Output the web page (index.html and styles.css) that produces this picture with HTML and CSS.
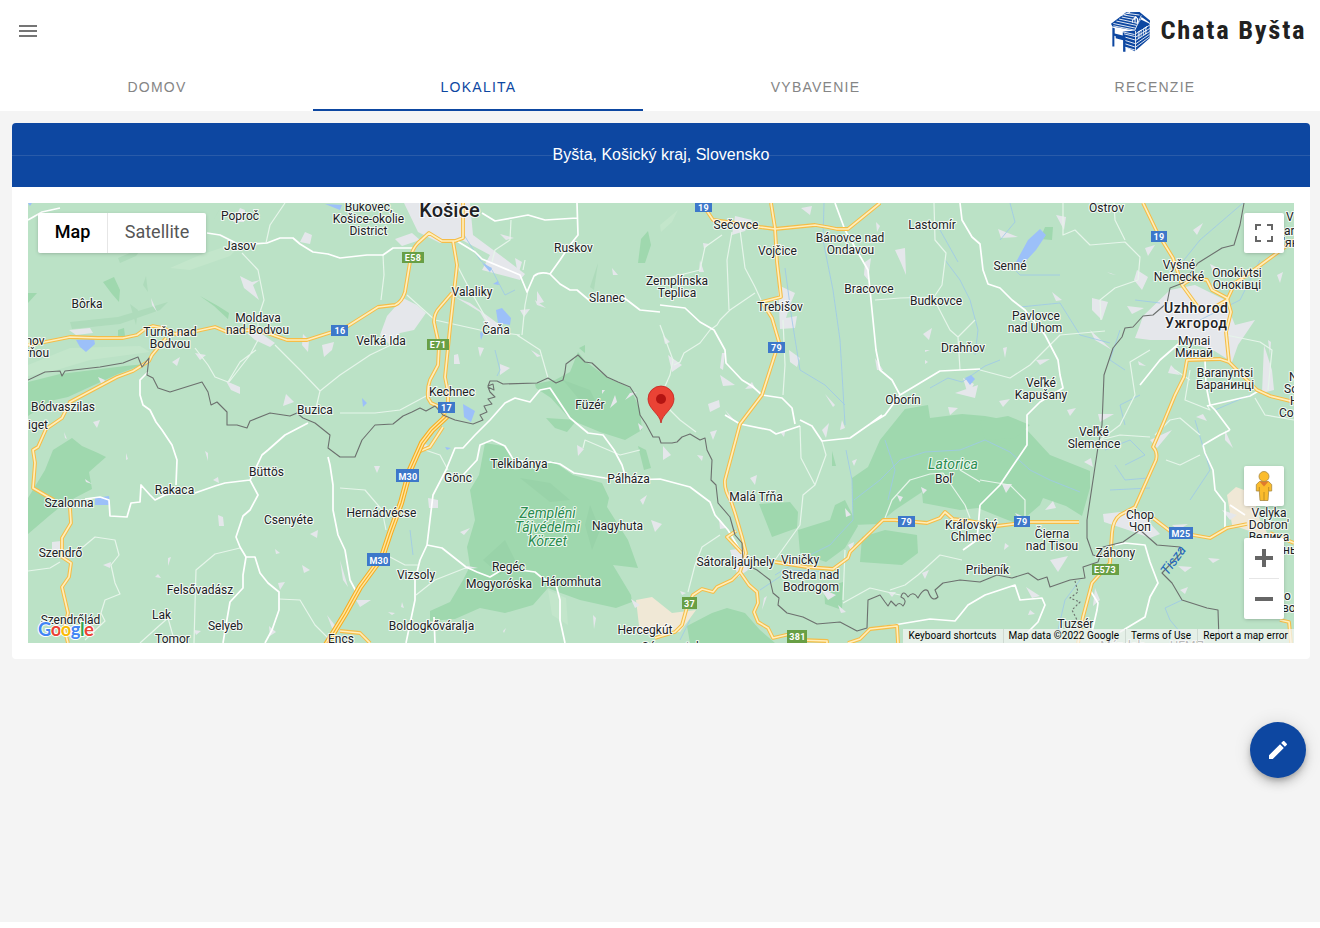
FILE: index.html
```html
<!DOCTYPE html>
<html lang="sk">
<head>
<meta charset="utf-8">
<title>Chata Byšta</title>
<link rel="stylesheet" href="styles.css">
</head>
<body>
<header class="topbar">
  <button class="menu" aria-label="Menu"><svg viewBox="0 0 24 24"><path d="M3 6h18v2H3zM3 11h18v2H3zM3 16h18v2H3z"/></svg></button>
  <a class="brand">
    <svg class="house" viewBox="60 33 122 122">
      <path class="ink" d="M63 71 108 37l40-1 31 25v8l-25-18-19 41-68-13z"/>
      <path class="ink" d="M67 82l7 2v16l24 6V94l34-2 20-34 26 13v43l-44 39-28-13v14h-7v-34l-22-6v-6l-4-1v32h-6z"/>
      <path class="gap" d="M70 77l64 13 19-44M70 70l66 14M79 63l60 13M87 57l55 12M95 51l40 8M102 45l38 7M111 40l37 5M92 47l28-10M136 92v60M136 101l42-26M136 111l42-26M136 121l42-27M136 131l42-29M136 141l42-31M102 101l32 8M106 111l28 8M106 121l28 9M106 131l28 9M106 141l28 8M75 90l58 13"/>
      <path class="panes" d="M143 95l11-7v21l-11 7zM159 85l11-7v21l-11 7zM126 60l10-12 8 8v15l-18-3z"/>
      <path class="ink" d="M145 97l3-2v7l-3 2zM150 94l3-2v7l-3 2zM145 107l3-2v6l-3 2zM150 104l3-2v6l-3 2zM161 87l3-2v7l-3 2zM166 84l3-2v7l-3 2zM161 97l3-2v6l-3 2zM166 94l3-2v6l-3 2zM129 59h4v8h-4zM136 55h4v12h-4z"/>
    </svg>
    <svg class="wordmark" viewBox="0 0 146 34"><text x="0.500" y="25" textLength="144" lengthAdjust="spacing">Chata Byšta</text></svg>
  </a>
</header>
<nav class="tabs">
  <a class="tab">DOMOV</a>
  <a class="tab active">LOKALITA</a>
  <a class="tab">VYBAVENIE</a>
  <a class="tab">RECENZIE</a>
</nav>
<main class="page">
  <section class="card">
    <h1 class="card-title"><span>Byšta, Košický kraj, Slovensko</span></h1>
    <div class="card-body">
      <div class="map">
        <svg class="canvas" viewBox="28 203 1266 440">
          <defs>
            <g id="highways">
              <path d="M28 345 45 342 70 337 98 338 123 338 137 335 145 329 153 326 163 328 175 334 197 331 215 327 227 332 250 330 267 333 287 340 307 340 332 332 348 326 378 307 395 305 Q402 302 405 292L410 262Q411 250 418 243L429 233 442 241 455 241 463 238 463 203"/>
              <path d="M453 241 457 265 454 292 450 328 445 377 448 392 448 403 443 418M452 293 440 307Q434 313 434 322L439 345 438 365 430 380Q427 388 428 398L431 403 440 407"/>
              <path d="M166 338 152 355 149 361 133 371 117 377 70 402 62 418 46 429 38 447 33 450 35 463 33 488 45 495 54 500M70 508 71 523 62 538 62 557 71 563 69 577 62 587 68 613 64 628 68 643"/>
              <path d="M707 211 713 220 735 223 760 227 775 229 815 225 827 227 837 229 848 229 880 203"/>
              <path d="M771 203 775 228 777 262 781 297 762 302 772 318 779 342 762 395 740 424 725 480Q724 490 731 501L735 513 742 537 746 553 740 572 732 580 717 587 713 592 702 589 693 595 687 607 682 625 675 632 655 638"/>
              <path d="M742 553 727 537 736 531M740 572 749 585 757 592 758 603 754 612 758 622 768 628 773 638 790 634 800 640 827 641V643"/>
              <path d="M775 562 807 567 833 569 848 558 850 552 883 520 895 520 927 523 940 518 945 512 953 519 970 521 997 526 1030 522 1079 522M848 643 860 639 870 629 897 626 898 643"/>
              <path d="M1143 203 1157 232 1173 258 1182 285 1198 307M1182 285 1193 278 1207 280 1212 290 1227 298 1231 312 1226 332 1229 362 1257 390 1270 396 1294 402"/>
              <path d="M1294 240 1277 253 1247 275 1235 283 1227 300 1213 308M1229 362 1220 359 1187 360 1184 377 1175 395 1163 424 1153 447Q1158 452 1156 460L1147 480 1135 507 1120 515Q1113 520 1112 533L1110 563 1092 583 1083 617 1078 643"/>
              <path d="M1153 518 1170 531 1210 538 1227 528 1247 524M1270 533 1294 543M1280 620 1289 622 1291 643M340 631 360 633 370 643M443 427 430 447 418 452"/>
            </g>
            <path id="motorway" d="M447 416 432 430 422 443 410 470 401 503 390 533 382 557 360 587 345 614 326 645"/>
          </defs>
          <rect class="land" x="28" y="203" width="1266" height="440"/>

          <g class="pale">
            <path d="M28 365 70 348 140 346 150 352 90 360 50 372 28 376zM170 268 200 255 245 240 230 256 190 270zM660 225 678 210 672 222 661 232zM548 590 566 598 568 625 552 615z"/>
          </g>
          <g class="forest">
            <path d="M28 382 60 374 125 366 145 364 118 374 68 397 50 401 28 416zM28 498 45 470 53 450 72 438 82 446 98 453 106 457 89 472 92 489 65 503 49 516 28 534z"/>
            <path d="M103 282 114 277 120 290 119 302 112 294zM200 296 218 306 229 313 228 319 214 306zM28 293 37 293 28 303zM118 330 124 328 125 336 118 337z"/>
            <path d="M535 384 555 380 570 372 578 352 585 361 608 378 630 388 640 409 642 430 625 440 600 432 571 420 551 398 536 388zM546 418 577 420 567 432 555 428z"/>
            <path d="M485 443 503 446 514 458 514 470 540 466 553 461 573 475 602 483 609 498 607 507 628 540 638 568 613 565 631 595 632 602 616 608 580 600 558 592 548 588 533 605 505 613 480 608 455 619 430 621 430 611 450 602 463 580 470 566 467 547 475 520 470 490 479 475z"/>
            <path d="M641 239 648 231 651 245 645 263 638 263zM579 348 585 345 585 353zM638 446 646 450 651 468 644 470z"/>
            <path d="M905 409 928 405 930 418 962 414 985 416 1007 420 1027 430 1050 455 1090 471 1090 488 1082 516 1066 506 1043 498 1040 505 1018 524 1000 517 978 508 960 510 923 503 922 492 895 510 878 524 853 525 852 478 868 467 880 440z"/>
            <path d="M759 504 790 502 798 512 797 528 772 537zM798 530 830 520 835 505 845 500 858 526 845 548 826 562 800 553zM862 537 885 530 917 535 918 553 902 565 860 562zM824 588 843 582 842 610 825 604zM832 451 836 466 832 466z"/>
            <path d="M687 626 712 613 727 608 745 613 760 630 775 643H690zM1045 227 1053 227 1052 240 1040 239zM980 421 1008 416 1030 425 1015 438 985 440z"/>
          </g>
          <g class="shade">
            <path d="M118 258 142 248 136 256 120 263zM146 276 148 292 143 285zM70 322 118 317 168 302 160 310 120 324 72 329zM130 304 138 310 136 325zM220 208 212 223 218 212zM598 263 590 287 594 290z"/>
            <path class="on-forest" d="M520 478 550 483 570 500 550 502zM483 560 505 540 515 560 500 575zM590 505 600 530 592 550 585 525zM563 380 590 390 600 410 578 398z"/>
          </g>
          <g class="sand"><path d="M636 600 652 597 672 613 696 610 680 632 640 634zM1227 495 1236 487 1252 493 1260 520 1270 538 1232 525z"/></g>

          <g class="urban">
            <path d="M404 203 418 232 440 243 462 240 490 255 482 270 520 280 525 274 500 255 473 235 470 203zM387 316 403 298 417 305 426 313 414 330 400 333 390 345 380 335zM455 297 470 303 500 325 506 335 492 333 480 312zM395 239 412 233 420 240 402 246z"/>
            <path d="M1143 316 1170 290 1195 285 1225 300 1235 325 1255 320 1238 345 1232 362 1213 350 1180 340 1150 340 1135 338 1140 325zM1264 345 1272 370 1274 390 1262 393zM1268 340 1271 342 1270 355z"/>
            <path d="M778 285 795 293 790 305 786 318 797 316 795 328 780 329zM735 216 752 220 745 231 732 235zM1103 514 1120 512 1142 515 1160 534 1150 538 1128 530 1104 522zM730 550 745 548 748 570 738 577z"/>
            <path d="M69 330 90 328 93 333 76 335zM151 298 157 312 152 305zM240 276 252 282 260 280 253 285 259 300 244 288zM240 208 245 210 244 222 233 222zM305 232 312 235 310 244 300 242zM303 334 309 340 308 352 302 345zM322 345 334 342 332 350 324 357zM172 362 180 357 177 366zM226 381 240 387 240 394 231 390zM286 394 294 402 283 406zM98 377 105 380 102 385zM247 333 262 334 275 343 270 347 255 340zM195 353 206 355 200 360zM188 331 181 338 176 330z"/>
            <path d="M93 422 100 420 97 428zM64 432 67 439 65 438zM85 479 92 484 86 482zM205 451 208 453 208 461zM126 453 128 459 126 460zM218 515 223 517 224 526 219 526zM310 534 318 530 317 538zM168 558 171 557 168 566zM155 577 161 578 158 574zM52 542 61 541 62 550 52 550zM103 565 111 562 110 568zM278 583 285 582 280 590zM269 626 276 632 270 636zM194 630 201 631 196 635zM275 549 280 553 276 554zM213 480 218 477 219 483zM302 565 310 570 304 573zM327 615 340 632 332 628z"/>
            <path d="M478 347 484 348 480 357zM454 355 458 354 460 364 454 364zM500 364 510 368 500 375zM535 300 546 308 537 305zM602 390 605 390 602 394zM537 291 544 302 537 304zM612 268 618 275 613 275zM515 258 522 262 518 275zM500 234 514 238 506 240zM520 310 530 309 524 317zM531 350 541 356 537 357zM630 393 637 392 625 400zM615 395 617 402 610 408z"/>
            <path d="M428 498 438 500 438 508 429 508zM374 466 380 466 377 473zM420 443 428 445 422 450zM460 532 470 528 464 535zM577 445 584 449 578 456zM640 500 647 495 643 505zM651 520 662 524 655 532zM593 615 596 618 594 629zM468 566 478 568 464 569zM356 600 371 600 360 607zM340 560 348 587 343 580zM503 631 506 628 504 633zM402 602 404 608 401 607zM388 612 395 613 392 615zM638 423 643 427 640 431zM631 599 640 605 635 608z"/>
            <path d="M801 208 812 206 810 215zM703 243 709 244 704 249zM700 260 704 272 699 272zM663 335 670 342 665 344zM668 355 682 365 672 372zM722 353 725 353 723 370 720 368zM789 350 800 358 797 367 790 362zM708 404 719 400 720 407 710 412zM825 394 835 405 833 407zM895 250 905 248 906 275 901 263zM865 262 871 258 868 280 864 275zM875 358 883 370 877 370zM923 334 932 328 929 340zM925 352 930 350 925 350zM925 360 928 362 925 364zM720 375 735 385 723 386zM752 382 745 389 755 388zM737 423 730 418 725 410zM963 378 974 384 968 395zM955 393 978 385 975 398zM876 222 880 226 877 232zM948 407 958 408 950 415z"/>
            <path d="M663 446 671 455 663 460zM697 455 703 456 702 461zM710 432 717 430 713 440zM728 420 722 413zM842 420 845 428 840 430zM822 430 829 423 826 438zM852 461 857 459 854 466zM845 508 851 515 846 517zM897 495 903 497 900 502zM921 487 927 490 923 494zM750 478 757 475 755 485zM780 432 785 432 784 437zM719 518 726 528 720 529zM848 545 854 542 852 552zM764 598 767 596 762 610zM838 605 846 612 841 613zM922 573 929 570 925 579zM888 592 896 592 892 597zM820 588 836 595 828 600zM680 591 686 593 682 595z"/>
            <path d="M998 229 1018 237 1001 238zM1056 215 1066 217 1064 230zM1145 248 1155 245 1148 256zM1193 230 1203 223 1197 235zM1210 264 1218 268 1214 275zM1107 272 1116 275 1111 274zM1137 270 1148 277 1142 290 1134 280zM1092 298 1108 302 1102 320 1092 310zM1127 306 1144 308 1132 314zM1090 330 1112 350 1095 340zM1003 348 1007 347 1005 358zM1036 360 1050 359 1040 365zM999 401 1010 399 1003 407zM1067 410 1076 408 1070 416zM1098 414 1114 414 1100 422zM1138 361 1146 366 1139 365zM1196 417 1203 414 1207 421zM1277 275 1283 272 1280 283zM1171 365 1180 375 1168 373zM1052 292 1062 300 1056 301z"/>
            <path d="M1084 462 1091 458 1093 467zM1053 501 1056 508 1045 510zM1002 484 1012 484 1006 493zM1015 513 1027 518 1020 520zM1005 543 1009 546 1004 550zM1050 560 1068 556 1058 572zM1180 590 1188 587 1185 594zM1178 566 1192 567 1185 572zM1208 558 1220 559 1213 563zM1026 587 1040 596 1032 598zM1095 588 1100 600 1093 606zM1225 430 1233 448 1225 440zM1150 440 1172 430 1157 448zM1030 610 1035 614 1028 615zM1222 510 1237 515 1230 520zM1172 525 1188 524 1178 530z"/>
          </g>
          <g class="water">
            <path d="M76 340 94 339 95 344 86 352 80 347zM95 498 109 496 110 505 95 505zM496 310 502 308 511 318 510 325 498 323zM480 333 485 330 481 340zM482 263 492 268 490 272zM463 404 475 411 471 422 464 417zM362 398 367 403 363 407zM493 284 498 281 499 285zM1016 262 1028 240 1040 229 1046 235 1036 250 1024 263zM965 378 971 375 975 379 970 385zM325 204 342 205 340 210zM28 203 32 203 30 206zM445 447 451 448 447 450z"/>
          </g>
          <g class="stream">
            <path d="M824 203 823 240 833 290 840 340 843 390 845 425M785 268 792 320 800 370 825 385 845 405M846 450 852 480 853 520 838 536 830 545 800 560 775 575M945 260 960 280 970 300 978 330 975 355M930 388 948 378 962 382 985 366 1000 360M854 500 880 480 900 460 925 452 960 450 985 440 1010 452 1030 470 1050 480 1080 492M1007 262 1020 275 1060 275M1135 300 1160 303M1020 307 1060 303 1080 335 1110 343M1120 330 1110 360 1125 370M1105 450 1130 440 1145 455 1125 465M1110 490 1150 488M1115 465 1125 480 1148 478M1195 420 1210 470 1190 500M1243 203 1200 240 1180 265M1260 260 1240 300 1200 320"/>
            <path d="M464 235 480 260 492 270 505 295 515 290M495 350 500 370 497 376M407 485 402 505M410 530 413 555M1182 600 1165 608 1170 620 1180 632 1183 643M1080 580 1065 600 1058 630M1010 203 1015 222 1000 240M940 230 958 262M690 620 680 640M760 590 790 570 830 572M1125 425 1120 405 1140 395M885 440 895 470 888 500M1215 410 1250 395"/>
          </g>

          <g class="minor">
            <path d="M285 203 270 225 266 243M242 253 258 270 264 300 258 318 258 333M258 340 250 355 229 382M275 345 300 370 320 391 340 375M320 391 316 408 330 415M195 348 208 365 215 377 228 382 240 362 256 350M340 375 370 355 395 343M383 255 384 275 381 300M457 265 470 290 490 325M407 295 435 320 480 330 520 335M511 220 510 240 495 250 492 262M525 260 523 270M522 335 525 305 528 290M340 413 375 413 400 410 428 395M517 335 540 350 548 378M28 571 50 568 60 562M83 547 95 537 115 540 119 555 111 565 115 583 120 594 105 600 101 613 105 621 85 640M240 548 215 554 196 570 195 605 194 643M279 599 300 600 315 625 330 640M168 618 160 625 140 643M168 618 175 643"/>
            <path d="M340 488 365 490 382 510 386 530M425 450 440 455 448 470M390 557 405 565 418 565M416 595 435 580 468 567M732 232 727 260 729 310M740 230 745 268 755 287 761 300M660 280 700 270 705 247 722 235M755 293 730 310 720 320 717 325 710 330 700 343 684 353 680 362 674 365M783 320 785 365 783 395M660 325 673 360 670 375 662 393M934 203 935 240 946 253 942 285 934 297 900 298 875 300M937 305 950 330 958 337 960 370M958 337 975 320M800 426 801 458 815 485 803 495 800 525 775 560M822 441 826 455 815 485M845 550 843 600M843 603 870 588 900 595M885 518 892 500 910 480 930 474 943 473 965 505 970 518M960 470 980 482M696 432 680 420 660 400M688 592 695 565 702 547 720 535"/>
            <path d="M1063 203 1063 235 1075 230 1090 245 1125 242 1140 257 1138 280M1138 280 1115 288 1100 300 1101 320M1114 203 1115 220 1125 240M980 370 1010 378 1030 365 1060 335 1105 331M1150 350 1130 362 1135 395 1120 425 1100 440 1120 435 1150 437M1190 370 1185 400 1210 410 1207 405M1226 335 1260 342 1272 350 1268 390M1175 370 1190 380M1255 398 1265 415 1294 420M1166 460 1180 465 1200 455M1155 435 1170 420 1180 418 1200 435M962 560 940 555 918 575 905 585 890 590M980 480 1010 485 1025 500 1025 517M640 450 620 455 585 440 583 448"/>
          </g>
          <g class="major">
            <path d="M28 220 42 212 60 208M207 233 220 235 240 245 267 243 280 238 293 238 300 244 313 252 328 254 340 258 367 255 383 255 393 248 413 248M457 241 475 252 482 259 520 275 527 292 534 276Q540 271 550 274L560 260 570 245 578 235 577 203M550 274 560 284 570 290 577 290 590 301 623 297 640 310 660 312M482 213 495 221 512 218 528 215 545 220 577 218M835 203 845 230 868 270 871 300 876 350 880 370 892 380 900 395 885 415 870 424M900 395 925 380 940 371 980 369M882 415 870 424 850 438 822 441 812 426 800 420M660 305 685 308 700 322 714 330 725 350 726 363 742 380 752 386 762 395 782 398 792 408 795 424M725 415 740 424 770 430 776 434 800 426M960 203 962 220 972 237 980 244 983 270 988 284 1000 288 1012 300 1025 310 1045 335 1058 360 1060 375 1063 388 1040 402 1027 415 1027 445 1010 470 1000 485 980 505"/>
            <path d="M148 372 140 380 140 395 143 405 150 410 156 422 162 430 172 445 177 460 176 485M195 493 215 486 225 483 250 480 262 455 268 450 285 435 308 423M250 480 258 495 250 510 243 516 236 537 240 547 246 557 243 575 243 588 230 602 226 625 223 643M246 557 255 557 260 573 268 583 279 592 279 610 272 630 265 643M176 493 165 495 155 500 150 495 141 485 140 502 131 503 127 517 110 516 109 500 100 497 85 499M328 457 330 465 333 485 333 510 338 535 345 550 350 580 358 595M490 420 475 435 463 448 455 448 446 470 433 495 430 520 427 545 420 560 415 580 415 600 406 643M427 545 442 548 466 567 477 572 490 577 505 568 535 572 541 577 556 585 560 600 560 620 565 643M434 617 435 643M463 475 477 460 480 445 492 440 505 446 513 459 530 463 550 462 560 464 574 473 605 478M490 420 505 403 515 398 530 402 540 390 550 388 558 400 570 418 588 433 603 435 614 450 622 465 625 475M605 478 630 480 660 479 690 487 710 502 715 515 728 530 740 550M1203 445 1220 435 1230 430M1203 445 1205 453 1213 470 1215 490 1225 503 1225 528M1230 430 1215 410 1210 405M1207 406 1250 396 1260 390M1205 360 1206 385 1210 405M1183 340 1160 360 1140 385M870 629 930 619 955 621 960 615 968 605 985 595 1015 585 1020 600 1042 598 1045 605 1038 622 1020 640M1115 545 1125 543 1145 545 1150 562 1158 583 1150 597 1145 617 1120 632M1090 590 1098 603 1097 610 1092 632M963 550 977 540 980 505M1230 505 1245 515"/>
          </g>

          <use href="#highways" class="hw-case"/>
          <use href="#highways" class="hw-fill"/>
          <use href="#motorway" class="mw-case"/>
          <use href="#motorway" class="mw-fill"/>
          <use href="#motorway" class="mw-line"/>

          <g class="border">
            <path d="M28 380 45 372 60 371 62 376 65 371 100 367 123 363 138 357 142 367 149 358 147 375 153 378 158 388 170 392 202 382 208 392 211 405 217 402 227 412 227 425 237 425 247 428 250 421 270 413 290 416 297 413 303 418 315 423 330 435 328 448 340 457 355 457 362 440 375 425 393 424 403 416 412 412 420 408 426 411 435 406 443 415 455 420 473 424 483 420 480 415 487 412 484 406 492 404 488 399 495 397 490 392 488 387 494 390 493 384 488 386 490 381 497 381 503 384 537 383 548 378 556 383 563 380 565 372 566 364 578 355 585 362 592 363 607 377 618 382 630 387 637 398 640 415 646 424 653 437 659 437 661 443 672 443 677 442 682 437 690 434 700 440 705 438 707 450 712 460 711 480 716 485 718 503 730 517 735 535 742 543 743 563 757 570 770 580 773 593 779 598 778 605 787 613 803 617 817 624 840 622 857 631 867 628 868 600 880 595 885 602 888 606 891 601 896 606Q899 601 903 606 908 600 901 597 903 589 908 597 913 590 918 598 924 587 928 591 932 603 938 597L935 590 943 583 960 580 980 582 997 575 1012 578 1028 573 1038 580 1047 577 1050 587 1070 580 1085 578 1083 567 1098 562 1103 547 1123 542 1140 530 1157 545 1180 547 1181 553 1162 573 1172 583 1182 600 1207 608 1218 610 1219 640"/>
            <path d="M1244 203 1240 225 1234 245 1222 248 1198 263 1183 283 1170 288 1167 303 1153 315 1143 316 1133 327 1125 328 1122 337 1113 348 1104 375 1102 425 1098 447 1087 520 1087 538 1093 555 1100 557"/>
            <path class="dotted" d="M1075 581 1078 592 1070 598 1080 602 1072 610 1077 620"/>
          </g>

          <g class="shields">
            <g class="blue"><path d="M331 325h17v11h-17zM438 402h17v11h-17zM695 203h17v9h-17zM768 342h17v11h-17zM1151 231h16v11h-16zM898 516h17v11h-17zM1014 516h16v11h-16zM396 469h23v13h-23zM367 553h23v13h-23zM1169 527h24v12h-24z"/></g>
            <g class="green"><path d="M402 252h22v11h-22zM427 339h22v11h-22zM682 597h15v12h-15zM787 630h20v13h-20zM1092 564h27v11h-27z"/></g>
            <text x="340" y="334">16</text><text x="446.500" y="411">17</text><text x="703.500" y="210.500">19</text><text x="776.500" y="351">79</text><text x="1159" y="240">19</text><text x="906.500" y="525">79</text><text x="1022" y="525">79</text><text x="408" y="479.500">M30</text><text x="379" y="563.500">M30</text><text x="1181" y="536.500">M25</text><text x="413" y="261">E58</text><text x="438" y="348">E71</text><text x="689.500" y="606.500">37</text><text x="797.500" y="640">381</text><text x="1105" y="573">E573</text>
          </g>

          <g class="label">
            <text x="240" y="220">Poproč</text><text x="240" y="250">Jasov</text><text x="87" y="308">Bôrka</text>
            <text x="170" y="336">Turňa nad<tspan x="170" dy="12">Bodvou</tspan></text>
            <text x="258" y="322">Moldava<tspan x="257.500" dy="12">nad Bodvou</tspan></text>
            <text x="35" y="345">nov<tspan x="37" dy="11.500">rňou</tspan></text>
            <text x="63" y="411">Bódvaszilas</text><text x="38" y="429">iget</text><text x="315" y="414">Buzica</text>
            <text x="368.500" y="210.500">Bukovec,<tspan x="368.500" dy="12">Košice-okolie</tspan><tspan x="368.500" dy="12">District</tspan></text>
            <text x="573.500" y="252">Ruskov</text><text x="472" y="296">Valaliky</text><text x="607" y="302">Slanec</text><text x="496" y="334">Čaňa</text><text x="381" y="345">Veľká Ida</text><text x="452" y="396">Kechnec</text><text x="590" y="409">Füzér</text>
            <text x="677" y="285">Zemplínska<tspan x="677" dy="12">Teplica</tspan></text>
            <text x="736" y="229">Sečovce</text><text x="777.500" y="255">Vojčice</text><text x="780" y="311">Trebišov</text>
            <text x="850" y="242">Bánovce nad<tspan x="850.500" dy="12">Ondavou</tspan></text>
            <text x="869" y="293">Bracovce</text><text x="932" y="229">Lastomír</text><text x="936" y="305">Budkovce</text><text x="963" y="352">Drahňov</text><text x="903" y="404">Oborín</text>
            <text x="1106.500" y="212">Ostrov</text><text x="1010" y="270">Senné</text>
            <text x="1036" y="320">Pavlovce<tspan x="1035" dy="12">nad Uhom</tspan></text>
            <text x="1041" y="387">Veľké<tspan x="1041" dy="12">Kapušany</tspan></text>
            <text x="1179" y="269">Vyšné<tspan x="1179" dy="12">Nemecké</tspan></text>
            <text x="1237" y="277">Onokivtsi<tspan x="1237" dy="12">Оноківці</tspan></text>
            <text x="1194" y="345">Mynai<tspan x="1194" dy="12">Минай</tspan></text>
            <text x="1225" y="377">Baranyntsi<tspan x="1225" dy="12">Баранинці</tspan></text>
            <text class="start" x="1286" y="221">V</text><text class="start" x="1284" y="235">ar</text><text class="start" x="1283" y="247">'ян</text>
            <text class="start" x="1289" y="381">N</text><text class="start" x="1284" y="393">So</text><text class="start" x="1290" y="405">H</text><text class="start" x="1279" y="417">Co</text>
            <text x="1094" y="436">Veľké<tspan x="1094" dy="12">Slemence</tspan></text>
            <text x="266.500" y="476">Büttös</text><text x="174.500" y="494">Rakaca</text><text x="69" y="507">Szalonna</text><text x="288.500" y="524">Csenyéte</text><text x="60.500" y="557">Szendrő</text><text x="200" y="594">Felsővadász</text><text x="70.500" y="624">Szendrőlád</text><text x="161.500" y="619">Lak</text><text x="225.500" y="630">Selyeb</text><text x="172.500" y="643">Tomor</text><text x="341" y="643">Encs</text>
            <text x="519" y="468">Telkibánya</text><text x="458" y="482">Gönc</text><text x="628.500" y="483">Pálháza</text><text x="381.500" y="517">Hernádvécse</text><text x="617.500" y="530">Nagyhuta</text><text x="508.500" y="571">Regéc</text><text x="499" y="588">Mogyoróska</text><text x="571" y="586">Háromhuta</text><text x="416" y="579">Vizsoly</text><text x="431.500" y="630">Boldogkőváralja</text><text x="645" y="634">Hercegkút</text>
            <text x="756" y="501">Malá Tŕňa</text><text x="735.500" y="566">Sátoraljaújhely</text><text x="800" y="564">Viničky</text>
            <text x="810.500" y="579">Streda nad<tspan x="811" dy="12">Bodrogom</tspan></text>
            <text x="944" y="483">Boľ</text>
            <text x="971" y="529">Kráľovský<tspan x="971" dy="12">Chlmec</tspan></text>
            <text x="1052" y="538">Čierna<tspan x="1052" dy="12">nad Tisou</tspan></text>
            <text x="987.500" y="574">Pribeník</text><text x="1140" y="519">Chop<tspan x="1140" dy="12">Чоп</tspan></text><text x="1115.500" y="557">Záhony</text><text x="1075.500" y="628">Tuzsér</text>
            <text x="1269" y="517">Velyka<tspan x="1269" dy="12">Dobron'</tspan><tspan x="1269" dy="12">Велика</tspan></text>
            <text class="start" x="1283" y="554">нь</text><text class="start" x="1284" y="600">о</text><text class="start" x="1282" y="612">во</text>
            <text x="672" y="651">Sárospatak</text><text x="1122" y="650">Mándok</text><text x="1187" y="650">ЧЕМП</text>
            <g class="city"><text x="449.500" y="216.500" class="big">Košice</text><text x="1196" y="313" textLength="64">Uzhhorod</text><text x="1196" y="328" textLength="62">Ужгород</text></g>
            <g class="park"><text x="547.500" y="518">Zempléni<tspan x="547.500" dy="14">Tájvédelmi</tspan><tspan x="547.500" dy="14">Körzet</tspan></text><text x="953" y="469" textLength="50">Latorica</text></g>
            <text class="river" transform="translate(1177 563) rotate(-54)">Tisza</text>
          </g>

          <path class="pin" d="M661 423c-1-9-13-14-13-24a13 13 0 0 1 26 0c0 10-12 15-13 24z"/>
          <circle class="pin-dot" cx="661" cy="399" r="5"/>
          <text class="google" x="38" y="635.500" textLength="56"><tspan class="g-blue">G</tspan><tspan class="g-red">o</tspan><tspan class="g-yellow">o</tspan><tspan class="g-blue">g</tspan><tspan class="g-green">l</tspan><tspan class="g-red">e</tspan></text>
        </svg>
        <div class="map-types"><button class="on">Map</button><button>Satellite</button></div>
        <button class="control fullscreen" aria-label="Fullscreen"><svg viewBox="0 0 18 18"><path d="M0 0h6v2H2v4H0zM12 0h6v6h-2V2h-4zM0 12h2v4h4v2H0zM16 12h2v6h-6v-2h4z"/></svg></button>
        <div class="side-controls">
          <button class="control" aria-label="Street View"><svg class="pegman" viewBox="0 0 18 32"><path class="body" d="M4.500 11.500h9l3.200 3v6.500h-3l-.7 9.500H5l-.7-9.500h-3v-6.500z"/><path class="scarf" d="M4.500 11.500h9L9 16.500z"/><path class="leg" d="M9 22v8.500M4.300 21v-4M13.700 21v-4"/><circle class="body" cx="9" cy="6.500" r="5"/></svg></button>
          <div class="zoom"><button aria-label="Zoom in"><svg viewBox="0 0 18 18"><path d="M0 7h7V0h4v7h7v4h-7v7H7v-7H0z"/></svg></button><button aria-label="Zoom out"><svg viewBox="0 0 18 18"><path d="M0 7h18v4H0z"/></svg></button></div>
        </div>
        <div class="credits"><span>Keyboard shortcuts</span><span>Map data ©2022 Google</span><span>Terms of Use</span><span>Report a map error</span></div>
      </div>
    </div>
  </section>
  <button class="fab" aria-label="Edit"><svg viewBox="0 0 24 24"><path d="M20.710 7.040C21.100 6.650 21.100 6 20.710 5.630L18.370 3.290C18 2.900 17.350 2.900 16.960 3.290L15.120 5.120L18.870 8.870M3 17.250V21H6.750L17.810 9.930L14.060 6.180L3 17.250Z"/></svg></button>
</main>
</body>
</html>
```
FILE: styles.css
```css
* { box-sizing: border-box; }
body { margin: 0; background: #fff; font-family: "Liberation Sans", Arial, sans-serif; }
button { border: 0; padding: 0; margin: 0; background: none; font: inherit; }
svg { display: block; }

.topbar { height: 62px; display: flex; justify-content: space-between; align-items: center; padding: 0 14px 0 16px; }
.menu svg { width: 24px; height: 24px; fill: #757575; }
.brand { display: flex; align-items: center; gap: 9px; }
.house { width: 41px; height: 41px; }
.house .ink { fill: #0d47a1; }
.house .gap { fill: none; stroke: #fff; stroke-width: 2.600; }
.house .panes { fill: #fff; }
.wordmark { width: 146px; height: 34px; }
.wordmark text { font: 700 26.500px "Roboto Condensed", "Roboto", sans-serif; font-stretch: condensed; fill: #212121; }

.tabs { height: 49px; display: grid; grid-template-columns: 313px 330px 344px 1fr; }
.tab { display: flex; align-items: center; justify-content: center; padding: 2px 0 0 1px; font-size: 14px; letter-spacing: 1.250px; color: #858585; border-bottom: 2px solid transparent; }
.tab:last-child { padding-left: 3px; }
.tab.active { color: #0d47a1; border-bottom-color: #0d47a1; }

.page { position: relative; height: 811px; padding: 12px 10px 0 12px; background: #f4f4f4; }
.card { height: 536px; background: #fff; border-radius: 4px; overflow: hidden; }
.card-title { height: 64px; margin: 0; display: flex; align-items: center; justify-content: center; color: #fff; font-size: 16px; font-weight: 400; background: linear-gradient(#295ba9, #295ba9) 0 32px / 100% 1px no-repeat #0d47a1; }
.card-title span { background: #0d47a1; }
.card-body { padding: 16px; }
.map { position: relative; height: 440px; overflow: hidden; font-family: Roboto, sans-serif; }
.canvas { width: 1266px; height: 440px; }

.land { fill: #bbe2c6; }
.pale { fill: #c3e6cb; }
.forest { fill: #9fd8ae; }
.shade { fill: #aedbbb; }
.shade .on-forest { fill: #99d3a9; }
.sand { fill: #f0e8d6; }
.urban { fill: #e5e7eb; }
.water { fill: #9cc0f9; }
.stream, .minor, .major, .border { fill: none; stroke-linejoin: round; }
.stream { stroke: #9dc8ea; stroke-width: .8; }
.minor { stroke: #e6f5ea; stroke-width: 1.200; }
.major { stroke: #fff; stroke-width: 1.700; }
.hw-case, .hw-fill, .mw-case, .mw-fill, .mw-line { fill: none; stroke-linejoin: round; }
.hw-case { stroke: #f5bd48; stroke-width: 3.800; }
.hw-fill { stroke: #ffeebb; stroke-width: 1.700; }
.mw-case { stroke: #f7ae22; stroke-width: 6.200; }
.mw-fill { stroke: #ffe6a0; stroke-width: 4; }
.mw-line { stroke: #f7ae22; stroke-width: 1.200; }
.border { stroke: #6c706e; stroke-width: 1.100; }
.dotted { stroke-dasharray: 2 2; }
.blue { fill: #3d78ca; }
.green { fill: #689f45; }
.shields text { fill: #fff; font-size: 9px; font-weight: 700; text-anchor: middle; letter-spacing: .3px; }

.label text { font-size: 12px; fill: #202124; text-anchor: middle; stroke: #fff; stroke-opacity: .8; stroke-width: 2.200px; stroke-linejoin: round; paint-order: stroke; }
.label .start { text-anchor: start; }
.label .city text { font-size: 14px; font-weight: 500; }
.label .city .big { font-size: 20px; }
.label .park text { font-size: 14px; font-style: italic; fill: #2a8c4f; }
.label text.river { font-size: 14px; font-style: italic; fill: #2469bd; stroke: none; }
.pin { fill: #ea4335; stroke: #c5221f; stroke-width: .8; }
.pin-dot { fill: #b31412; }
.google { font: 700 18.500px Lato, sans-serif; stroke: #fff; stroke-width: 2px; paint-order: stroke; }
.g-blue { fill: #4285f4; }
.g-red { fill: #ea4335; }
.g-yellow { fill: #fbbc04; }
.g-green { fill: #34a853; }

.map-types { position: absolute; left: 10px; top: 10px; width: 168px; height: 40px; display: grid; grid-template-columns: 70px 98px; background: #fff; border-radius: 2px; box-shadow: 0 1px 4px -1px rgba(0, 0, 0, .3); }
.map-types button { font-size: 18px; line-height: 38px; padding-bottom: 2px; color: #565656; }
.map-types .on { color: #000; font-weight: 500; border-right: 1px solid #e6e6e6; }
.control { width: 40px; height: 40px; display: flex; align-items: center; justify-content: center; background: #fff; border-radius: 2px; box-shadow: 0 1px 4px -1px rgba(0, 0, 0, .3); }
.control svg, .zoom svg { width: 18px; height: 18px; fill: #666; }
.fullscreen { position: absolute; right: 10px; top: 10px; }
.side-controls { position: absolute; right: 10px; bottom: 24px; display: flex; flex-direction: column; gap: 32px; }
.side-controls .pegman { width: 18px; height: 32px; }
.pegman .body { fill: #fbbc2c; stroke: #a88a45; stroke-width: .8; }
.pegman .scarf { fill: #e07a2c; }
.pegman .leg { stroke: #b98a25; stroke-width: .9; }
.zoom { width: 40px; height: 81px; padding: 0 5px; background: #fff; border-radius: 2px; box-shadow: 0 1px 4px -1px rgba(0, 0, 0, .3); }
.zoom button { width: 30px; height: 40px; display: flex; align-items: center; justify-content: center; }
.zoom button + button { height: 41px; border-top: 1px solid #e6e6e6; }
.credits { position: absolute; right: 0; bottom: 0; height: 14px; display: flex; align-items: center; font-size: 10px; letter-spacing: .075px; color: #000; background: rgba(245, 245, 245, .72); white-space: nowrap; }
.credits span { padding: 0 6px 0 5px; line-height: 14px; }
.credits span + span { border-left: 1px solid #cfdad2; }

.fab { position: absolute; right: 14px; top: 611px; width: 56px; height: 56px; display: flex; align-items: center; justify-content: center; border-radius: 50%; background: #0d47a1; box-shadow: 0 3px 5px -1px rgba(0, 0, 0, .2), 0 6px 10px rgba(0, 0, 0, .14), 0 1px 18px rgba(0, 0, 0, .12); }
.fab svg { width: 24px; height: 24px; fill: #fff; }
```
